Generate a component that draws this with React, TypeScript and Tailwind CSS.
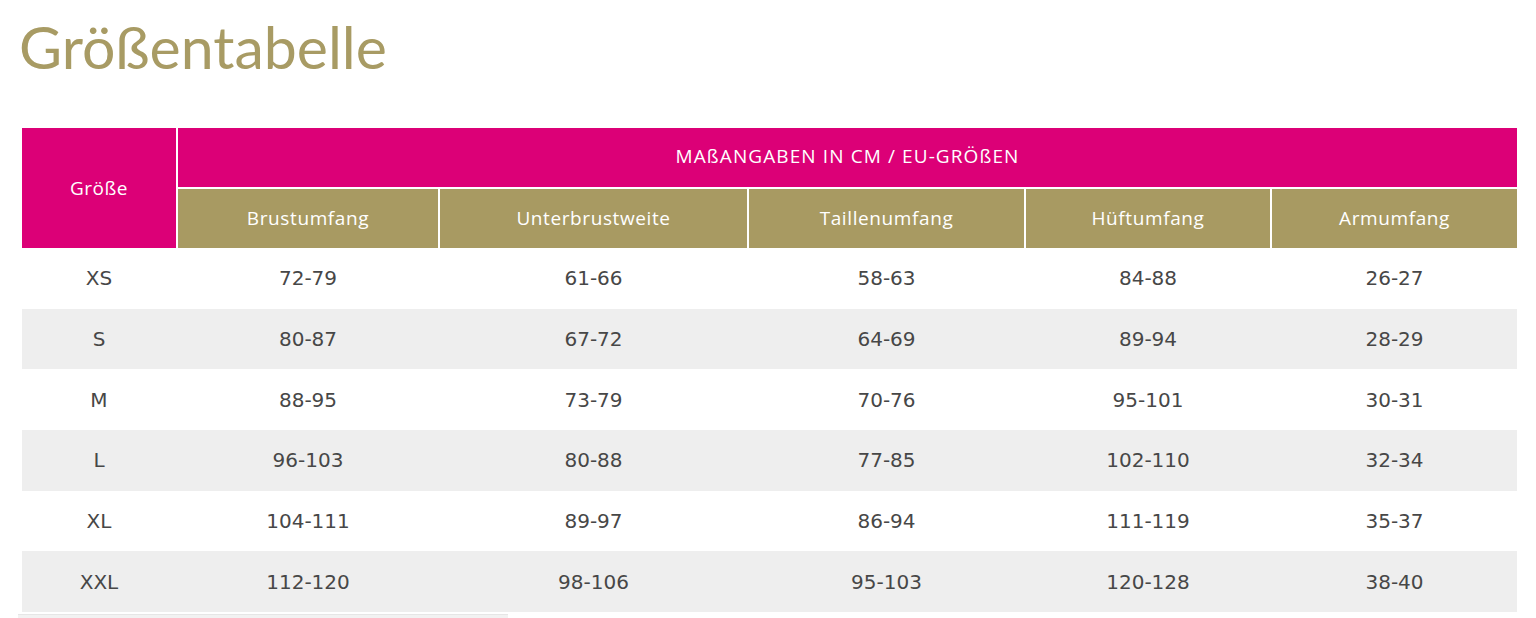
import React from "react";

const rows = [
  ["XS", "72-79", "61-66", "58-63", "84-88", "26-27"],
  ["S", "80-87", "67-72", "64-69", "89-94", "28-29"],
  ["M", "88-95", "73-79", "70-76", "95-101", "30-31"],
  ["L", "96-103", "80-88", "77-85", "102-110", "32-34"],
  ["XL", "104-111", "89-97", "86-94", "111-119", "35-37"],
  ["XXL", "112-120", "98-106", "95-103", "120-128", "38-40"],
];

const heads = ["Brustumfang", "Unterbrustweite", "Taillenumfang", "Hüftumfang", "Armumfang"];

const cols = "grid grid-cols-[154px_260px_307px_275px_244px_245px] gap-x-[2px]";

export default function App() {
  return (
    <div className="w-[1536px] h-[618px] bg-white overflow-hidden relative">
      <h1
        className="pl-[19px] pt-[13px] text-[59px] leading-[68px] text-[#a89b64] font-normal"
        style={{ fontFamily: "Lato, 'Open Sans', sans-serif" }}
      >
        Größentabelle
      </h1>
      <div className="ml-[22px] mt-[47px] w-[1495px]">
        <div
          className={`${cols} grid-rows-[59px_59px] gap-y-[2px] text-white text-[19px] font-medium`}
          style={{ fontFamily: "'Open Sans', Lato, sans-serif" }}
        >
          <div className="row-span-2 bg-[#dc0077] flex items-center justify-center tracking-[0.5px]">
            Größe
          </div>
          <div className="col-span-5 bg-[#dc0077] flex items-center justify-center tracking-[1.1px] pb-[2px]">
            MAßANGABEN IN CM / EU-GRÖßEN
          </div>
          {heads.map((h) => (
            <div key={h} className="bg-[#a89a62] flex items-center justify-center tracking-[0.6px]">
              {h}
            </div>
          ))}
        </div>
        {rows.map((r, i) => (
          <div
            key={r[0]}
            className={`${cols} h-[60.67px] items-center text-[#474747] text-[20px] ${
              i % 2 === 1 ? "bg-[#eeeeee]" : "bg-white"
            }`}
            style={{ fontFamily: "'DejaVu Sans', Verdana, sans-serif" }}
          >
            {r.map((c, j) => (
              <div key={j} className="text-center">
                {c}
              </div>
            ))}
          </div>
        ))}
      </div>
      <div className="absolute left-[18px] top-[614px] w-[490px] h-[4px] bg-[#f2f2f2] border-t border-[#e6e6e6]" />
    </div>
  );
}
